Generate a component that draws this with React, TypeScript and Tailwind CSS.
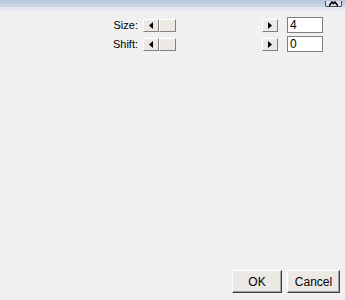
const Arrow = ({ dir }: { dir: "left" | "right" }) => (
  <div className="flex h-full w-[16px] items-center justify-center border border-t-white border-l-white border-r-[#808080] border-b-[#808080] bg-[#ece9e4]">
    <svg width="4" height="7" viewBox="0 0 4 7">
      {dir === "left" ? <path d="M4 0 L0 3.5 L4 7 Z" fill="#000" /> : <path d="M0 0 L4 3.5 L0 7 Z" fill="#000" />}
    </svg>
  </div>
);

const SliderRow = ({ label, value }: { label: string; value: string }) => (
  <div className="flex items-center">
    <span className="w-[143px] pr-[5px] text-right text-[11px] leading-none text-black [font-family:'Liberation_Sans',Arial,sans-serif]">
      {label}
    </span>
    <div className="flex h-[13px] w-[135px] bg-[repeating-conic-gradient(#f7f7f7_0%_25%,#e9e9e9_0%_50%)] bg-[length:2px_2px]">
      <Arrow dir="left" />
      <div className="h-full w-[17px] border border-t-white border-l-white border-r-[#808080] border-b-[#808080] bg-[#ece9e4]" />
      <div className="flex-1" />
      <Arrow dir="right" />
    </div>
    <input
      readOnly
      value={value}
      className="ml-[9px] h-[16px] w-[36px] border border-[#7f7f7f] bg-white px-[2px] text-[12px] leading-none text-black outline-none [font-family:'Liberation_Sans',Arial,sans-serif]"
    />
  </div>
);

export default function App() {
  return (
    <div className="flex h-[300px] w-[345px] flex-col overflow-hidden bg-[#f0f0f0] [font-family:'Liberation_Sans',Arial,sans-serif]">
      {/* title bar remnant */}
      <div className="flex h-[7px] items-end justify-end bg-gradient-to-b from-[#b8c5dc] to-[#cdd6e6] pr-[3px]">
        <div className="flex h-[6px] w-[17px] items-end justify-center rounded-b-[2px] border border-t-0 border-[#4a4a4a] bg-[#dde2ea]">
          <svg width="9" height="5" viewBox="0 0 9 5">
            <path d="M0 5 L3 1 L4.5 2.5 L6 1 L9 5" stroke="#000" strokeWidth="1.6" fill="none" />
          </svg>
        </div>
      </div>
      <div className="h-[3px] bg-[#e3e8f0]" />

      <div className="mt-[7px] flex flex-col gap-[3px]">
        <SliderRow label="Size:" value="4" />
        <SliderRow label="Shift:" value="0" />
      </div>

      <div className="flex-1" />

      <div className="mb-[7px] flex justify-end gap-[5px] pr-[5px]">
        <button className="h-[23px] w-[50px] border border-t-white border-l-white border-r-[#404040] border-b-[#404040] bg-[#ece9e4] text-[12px] text-black shadow-[inset_-1px_-1px_0_#a0a0a0]">
          OK
        </button>
        <button className="h-[23px] w-[53px] border border-t-white border-l-white border-r-[#404040] border-b-[#404040] bg-[#ece9e4] text-[12px] text-black shadow-[inset_-1px_-1px_0_#a0a0a0]">
          Cancel
        </button>
      </div>
    </div>
  );
}
